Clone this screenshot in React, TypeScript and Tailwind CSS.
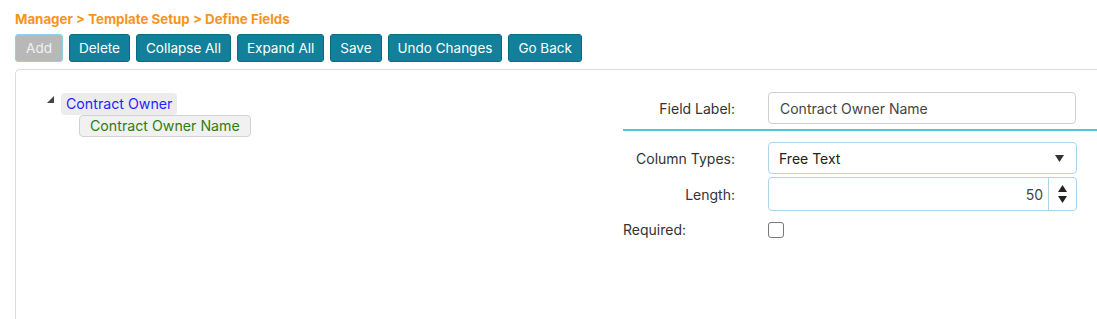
import React from "react";

const buttons = ["Delete", "Collapse All", "Expand All", "Save", "Undo Changes", "Go Back"];

export default function App() {
  return (
    <div className="min-h-[319px] bg-white pl-[15px] pt-[11px] text-[13px] text-[#333]" style={{ fontFamily: "Inter, 'Noto Sans', sans-serif" }}>
      <div className="h-[16px] font-bold text-[13.3px] leading-[16px] text-[#f7941d]">
        Manager &gt; Template Setup &gt; Define Fields
      </div>

      <div className="mt-[7px] flex gap-[6px]">
        <button className="h-[28px] w-[48px] rounded-[3px] border border-[#8fd3ea] bg-[#b8b8b8] text-[13.5px] text-[#f2f2f2]">
          Add
        </button>
        {buttons.map((b) => (
          <button
            key={b}
            className="h-[28px] rounded-[3px] border border-[#0b6b82] bg-[#13809b] px-[9px] text-[13.5px] text-white"
          >
            {b}
          </button>
        ))}
      </div>

      <div className="mt-[7px] flex h-[260px] rounded-tl-[5px] border-l border-t border-[#dcdcdc]">
        {/* tree */}
        <div className="w-[607px] pl-[31px] pt-[23px]">
          <div className="flex items-start">
            <svg width="7" height="7" viewBox="0 0 7 7" className="mt-[3px] mr-[7px]">
              <polygon points="7,0 7,7 0,7" fill="#444" />
            </svg>
            <div>
              <span className="inline-block h-[22px] rounded-[4px] bg-[#ececec] px-[5px] text-[14.2px] leading-[22px] text-[#1f1fff]">
                Contract Owner
              </span>
              <div className="ml-[18px]">
                <span className="inline-block h-[22px] rounded-[4px] border border-[#d2d2d2] bg-[#f1f1f1] px-[10px] text-[14.2px] leading-[20px] text-[#2f7d10]">
                  Contract Owner Name
                </span>
              </div>
            </div>
          </div>
        </div>

        {/* form */}
        <div className="flex-1 pt-[22px]">
          <div className="flex items-center">
            <label className="w-[112px] text-right text-[14px] text-[#333]">Field Label:</label>
            <input
              readOnly
              value="Contract Owner Name"
              className="ml-[33px] h-[32px] w-[308px] rounded-[4px] border border-[#cfcfcf] px-[11px] text-[14px] text-[#444] outline-none"
            />
          </div>
          <div className="mt-[5px] h-[2px] bg-[#5bc0de]" />

          <div className="mt-[11px] flex items-center">
            <label className="w-[112px] text-right text-[14px] text-[#333]">Column Types:</label>
            <div className="ml-[33px] flex h-[32px] w-[309px] items-center justify-between rounded-[4px] border border-[#a9d5ea] px-[10px] text-[14px] text-[#222]">
              <span>Free Text</span>
              <svg width="9" height="7" viewBox="0 0 9 7" className="mr-[2px]">
                <polygon points="0,0 9,0 4.5,7" fill="#333" />
              </svg>
            </div>
          </div>

          <div className="mt-[3px] flex items-center">
            <label className="w-[112px] text-right text-[14px] text-[#333]">Length:</label>
            <div className="ml-[33px] flex h-[34px] w-[309px] rounded-[4px] border border-[#a9d5ea]">
              <div className="flex flex-1 items-center justify-end pr-[5px] text-[14px] text-[#444]">50</div>
              <div className="flex w-[28px] flex-col items-center justify-center gap-[4px] border-l border-[#a9d5ea]">
                <svg width="9" height="7" viewBox="0 0 9 7">
                  <polygon points="4.5,0 9,7 0,7" fill="#222" />
                </svg>
                <svg width="9" height="7" viewBox="0 0 9 7">
                  <polygon points="0,0 9,0 4.5,7" fill="#222" />
                </svg>
              </div>
            </div>
          </div>

          <div className="mt-[8px] flex items-center">
            <label className="w-[145px] text-[14px] text-[#333]">Required:</label>
            <span className="h-[16px] w-[16px] rounded-[3px] border border-[#777] bg-white" />
          </div>
        </div>
      </div>
    </div>
  );
}
